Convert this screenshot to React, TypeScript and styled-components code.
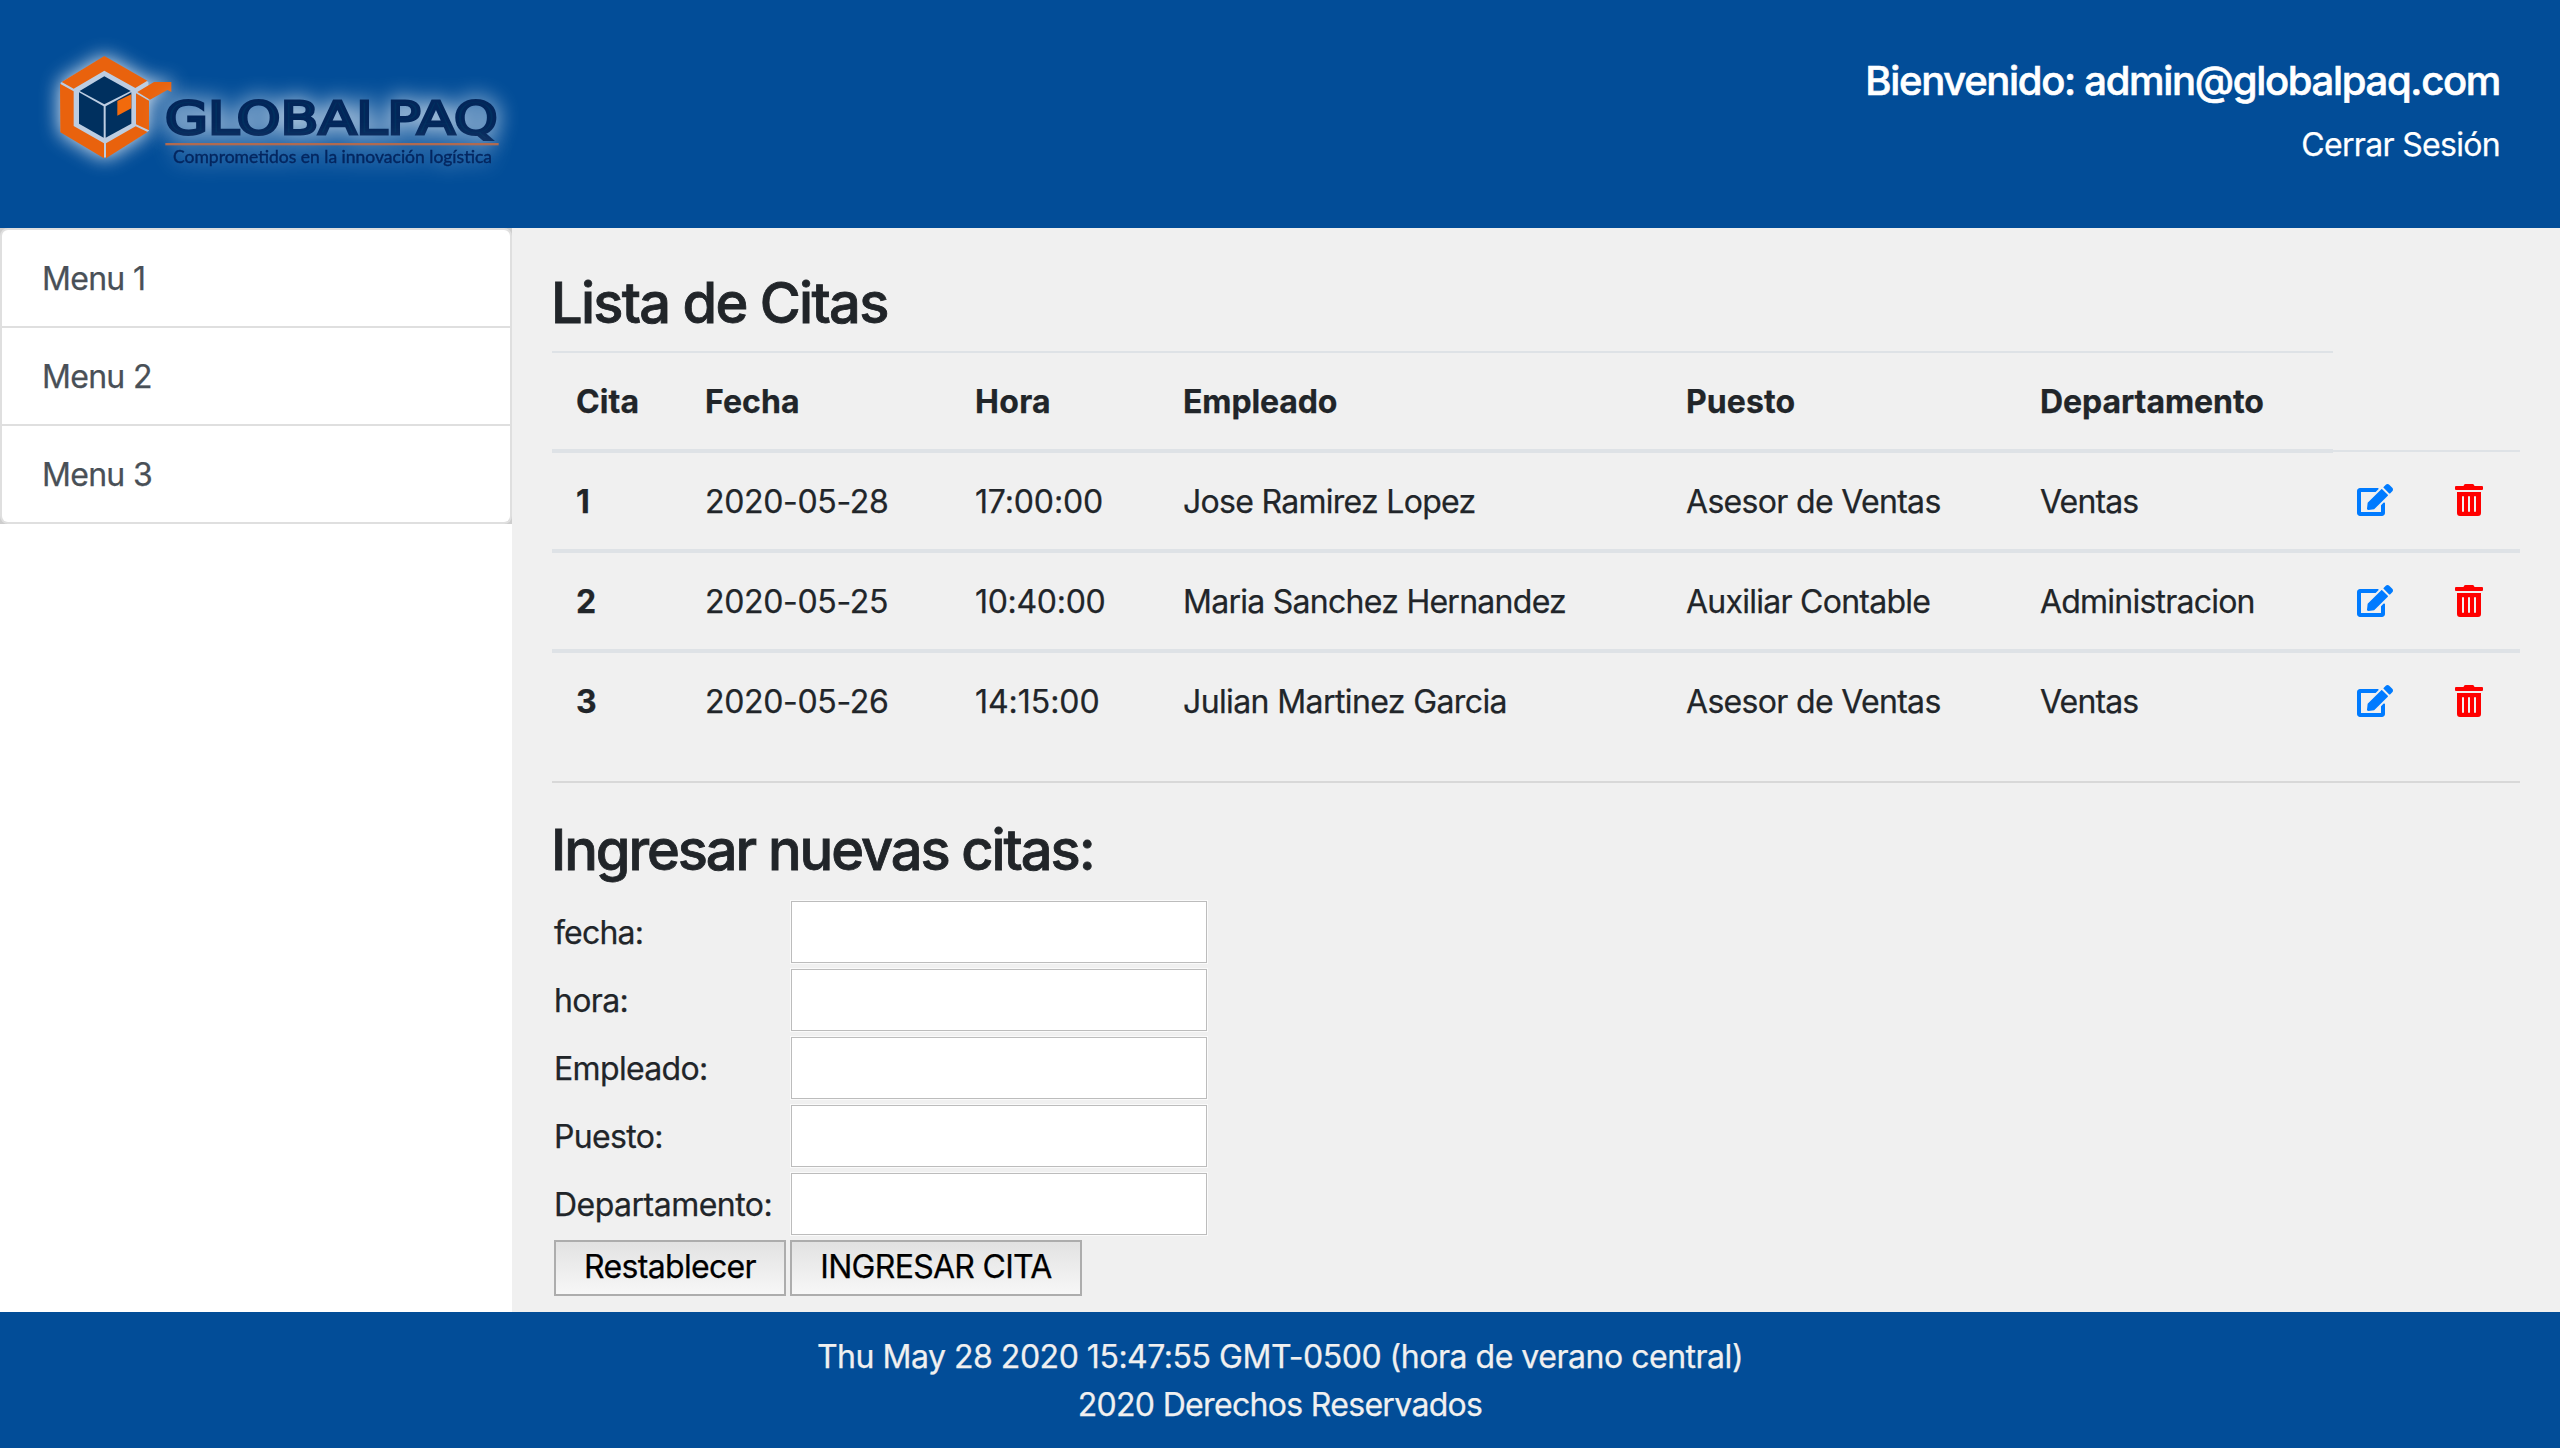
import React from "react";
import styled, { createGlobalStyle } from "styled-components";
import { FaEdit, FaTrashAlt } from "react-icons/fa";

const GlobalStyle = createGlobalStyle`
  *, *::before, *::after { box-sizing: border-box; }
  body {
    margin: 0;
    background: #fff;
    color: #212529;
    font: 400 32px/48px Inter, "Liberation Sans", sans-serif;
    -webkit-text-stroke-width: 0.25px;
  }
`;

const Page = styled.div`
  display: flex;
  flex-direction: column;
  height: 1448px;
`;

const Tracked = styled.span<{ $ls: number }>`
  letter-spacing: ${(p) => p.$ls}px;
  white-space: nowrap;
`;

const Header = styled.header`
  display: flex;
  justify-content: space-between;
  height: 228px;
  padding: 30px 60px 0 30px;
  background: #024d98;
  color: #fff;
`;

const LogoImage = styled.svg`
  width: 500px;
  height: 170px;
  overflow: visible;
  -webkit-text-stroke-width: 0;
`;

const Glow = styled.g<{ $spread: number; $alpha: number }>`
  filter: drop-shadow(0 0 ${(p) => p.$spread}px rgba(255, 255, 255, ${(p) => p.$alpha}));
`;

const LogoName = styled.text`
  font: 400 134px "DejaVu Sans", sans-serif;
  fill: #00305f;
  stroke: #03265a;
  stroke-width: 9px;
`;

const LogoTagline = styled.text`
  font: 400 53px Lato, sans-serif;
  fill: #04265f;
  stroke: #04265f;
  stroke-width: 1.2px;
`;

const UserArea = styled.div`
  display: flex;
  flex-direction: column;
  align-items: flex-end;
  gap: 16px;
  padding-top: 27px;
`;

const Welcome = styled.div`
  font-size: 40px;
  font-weight: 500;
  -webkit-text-stroke-width: 0.6px;
`;

const Logout = styled.a`
  color: #fff;
  text-decoration: none;
`;

const Body = styled.div`
  display: flex;
  height: 1084px;
`;

const Sidebar = styled.nav`
  width: 512px;
  background: #fff;
`;

const MenuList = styled.div`
  background: #cdcdcd;
`;

const MenuItem = styled.a`
  display: block;
  padding: 25px 40px 23px;
  border: 2px solid #dfdfdf;
  border-top-width: 0;
  background: #fff;
  color: #495057;
  &:first-child {
    border-top-width: 2px;
    border-radius: 8px 8px 0 0;
  }
  &:last-child {
    border-radius: 0 0 8px 8px;
  }
`;

const Main = styled.main`
  flex: 1;
  padding: 42px 40px 0;
  background: #f0f0f0;
`;

const Title = styled.h3`
  margin: 0 0 14px -1px;
  font-size: 56px;
  font-weight: 500;
  line-height: 67px;
  -webkit-text-stroke-width: 0.8px;
`;

const columns = "129px 270px 208px 503px 354px 317px 98px 89px";

const HeadRow = styled.div`
  display: grid;
  grid-template-columns: ${columns};
  height: 102px;
`;

const HeadCell = styled.div`
  padding: 25px 0 0 24px;
  border-top: 2px solid #dee2e6;
  border-bottom: 4px solid #dee2e6;
  font-weight: 700;
`;

const HeadGap = styled.div`
  grid-column: span 2;
  align-self: end;
  height: 2px;
  margin-bottom: 1px;
  background: #dee2e6;
`;

const Row = styled.div`
  display: grid;
  grid-template-columns: ${columns};
  height: 100px;
  border-bottom: 4px solid #dee2e6;
  &:last-child {
    height: 96px;
    border-bottom: 0;
  }
`;

const Cell = styled.div<{ $bold?: boolean }>`
  padding: 25px 0 0 24px;
  font-weight: ${(p) => (p.$bold ? 700 : 400)};
`;

const IconCell = styled.div<{ $width: number; $color: string }>`
  padding: 32px 0 0 24px;
  color: ${(p) => p.$color};
  svg {
    display: block;
    width: ${(p) => p.$width}px;
    height: 32px;
  }
  ${Row}:first-child & {
    padding-top: 31px;
  }
`;

const Divider = styled.hr`
  height: 2px;
  margin: 32px 0 34px;
  border: 0;
  background: #d8d8d8;
`;

const Form = styled.form`
  display: grid;
  grid-template-columns: 232px 418px;
  gap: 4px;
  padding: 2px 2px 0;
`;

const Label = styled.label`
  padding-top: 1px;
  line-height: 63px;
`;

const Input = styled.input`
  width: 418px;
  height: 64px;
  border: 1px solid #fafafa;
  outline: 1px solid #bcbcbc;
  outline-offset: -2px;
  background: #fff;
`;

const Button = styled.button<{ $width: number }>`
  width: ${(p) => p.$width}px;
  height: 56px;
  padding: 0 0 3px;
  border: 2px solid #adadad;
  background: linear-gradient(#e2e2e2, #f7f7f7);
  color: #000;
  font: inherit;
  line-height: 48px;
`;

const Footer = styled.footer`
  display: flex;
  flex-direction: column;
  align-items: center;
  height: 136px;
  padding-top: 21px;
  background: #024d98;
  color: #f0f0f0;
`;

type Txt = [string, number];

const heads: Txt[] = [
  ["Cita", 0.1],
  ["Fecha", 0.1],
  ["Hora", 0.3],
  ["Empleado", -0.12],
  ["Puesto", 0.1],
  ["Departamento", -0.06],
];

const rows: Txt[][] = [
  [["1", 0], ["2020-05-28", -0.33], ["17:00:00", -0.15], ["Jose Ramirez Lopez", -0.71], ["Asesor de Ventas", -0.68], ["Ventas", -0.85]],
  [["2", 0], ["2020-05-25", -0.33], ["10:40:00", -0.31], ["Maria Sanchez Hernandez", -0.73], ["Auxiliar Contable", -0.74], ["Administracion", -0.78]],
  [["3", 0], ["2020-05-26", -0.33], ["14:15:00", -0.05], ["Julian Martinez Garcia", -0.61], ["Asesor de Ventas", -0.68], ["Ventas", -0.85]],
];

const fields: Txt[] = [
  ["fecha:", -0.8],
  ["hora:", -0.65],
  ["Empleado:", -0.66],
  ["Puesto:", -0.65],
  ["Departamento:", -0.52],
];

function Logo() {
  return (
    <LogoImage viewBox="0 0 1500 510">
      <Glow $spread={30} $alpha={0.9}>
        <polygon points="92,158 223,80 355,156 357,302 225,383 92,305" fill="#bccde2" />
        <g fill="#e9620d">
          <polygon points="223,78 352,152 316,174 223,122 131,176 95,156" />
          <polygon points="90,161 131,184 131,288 222,340 222,385 91,307" />
          <polygon points="228,340 317,289 353,306 228,385" />
          <polygon points="318,190 357,212 357,301 318,283" />
          <polygon points="322,186 372,156 424,156 424,186 412,180 360,209" />
        </g>
        <g fill="#00305f">
          <polygon points="223,139 302,183 223,223 149,183" />
          <polygon points="147,187 221,229 221,323 147,281" />
          <polygon points="227,229 304,187 304,281 227,323" />
        </g>
        <polygon points="262,213 304,193 304,235 262,257" fill="#f26a0c" />
      </Glow>
      <Glow $spread={34} $alpha={1}>
        <LogoName x="405" y="311" textLength="998" lengthAdjust="spacingAndGlyphs">
          GLOBALPAQ
        </LogoName>
      </Glow>
      <Glow $spread={30} $alpha={0.5}>
        <rect x="406" y="339" width="1000" height="7" fill="#b06a50" />
        <LogoTagline x="429" y="400" textLength="957" lengthAdjust="spacingAndGlyphs">
          Comprometidos en la innovación logística
        </LogoTagline>
      </Glow>
    </LogoImage>
  );
}

export default function App() {
  return (
    <Page>
      <GlobalStyle />
      <Header>
        <Logo />
        <UserArea>
          <Welcome>
            <Tracked $ls={-1.32}>Bienvenido: admin@globalpaq.com</Tracked>
          </Welcome>
          <Logout>
            <Tracked $ls={-0.68}>Cerrar Sesión</Tracked>
          </Logout>
        </UserArea>
      </Header>
      <Body>
        <Sidebar>
          <MenuList>
            {["Menu 1", "Menu 2", "Menu 3"].map((m) => (
              <MenuItem key={m}>
                <Tracked $ls={-0.7}>{m}</Tracked>
              </MenuItem>
            ))}
          </MenuList>
        </Sidebar>
        <Main>
          <Title>
            <Tracked $ls={-1.74}>Lista de Citas</Tracked>
          </Title>
          <HeadRow>
            {heads.map(([t, ls]) => (
              <HeadCell key={t}>
                <Tracked $ls={ls}>{t}</Tracked>
              </HeadCell>
            ))}
            <HeadGap />
          </HeadRow>
          <div>
            {rows.map((r) => (
              <Row key={r[0][0]}>
                {r.map(([t, ls], i) => (
                  <Cell key={i} $bold={i === 0}>
                    <Tracked $ls={ls}>{t}</Tracked>
                  </Cell>
                ))}
                <IconCell $width={36} $color="#007bff">
                  <FaEdit />
                </IconCell>
                <IconCell $width={28} $color="#ff0000">
                  <FaTrashAlt />
                </IconCell>
              </Row>
            ))}
          </div>
          <Divider />
          <Title>
            <Tracked $ls={-2.08}>Ingresar nuevas citas:</Tracked>
          </Title>
          <Form>
            {fields.map(([t, ls]) => (
              <React.Fragment key={t}>
                <Label>
                  <Tracked $ls={ls}>{t}</Tracked>
                </Label>
                <Input type="text" />
              </React.Fragment>
            ))}
            <Button type="reset" $width={232}>
              <Tracked $ls={-0.67}>Restablecer</Tracked>
            </Button>
            <Button type="button" $width={292}>
              <Tracked $ls={-0.71}>INGRESAR CITA</Tracked>
            </Button>
          </Form>
        </Main>
      </Body>
      <Footer>
        <Tracked $ls={-0.477}>Thu May 28 2020 15:47:55 GMT-0500 (hora de verano central)</Tracked>
        <Tracked $ls={-0.68}>2020 Derechos Reservados</Tracked>
      </Footer>
    </Page>
  );
}
